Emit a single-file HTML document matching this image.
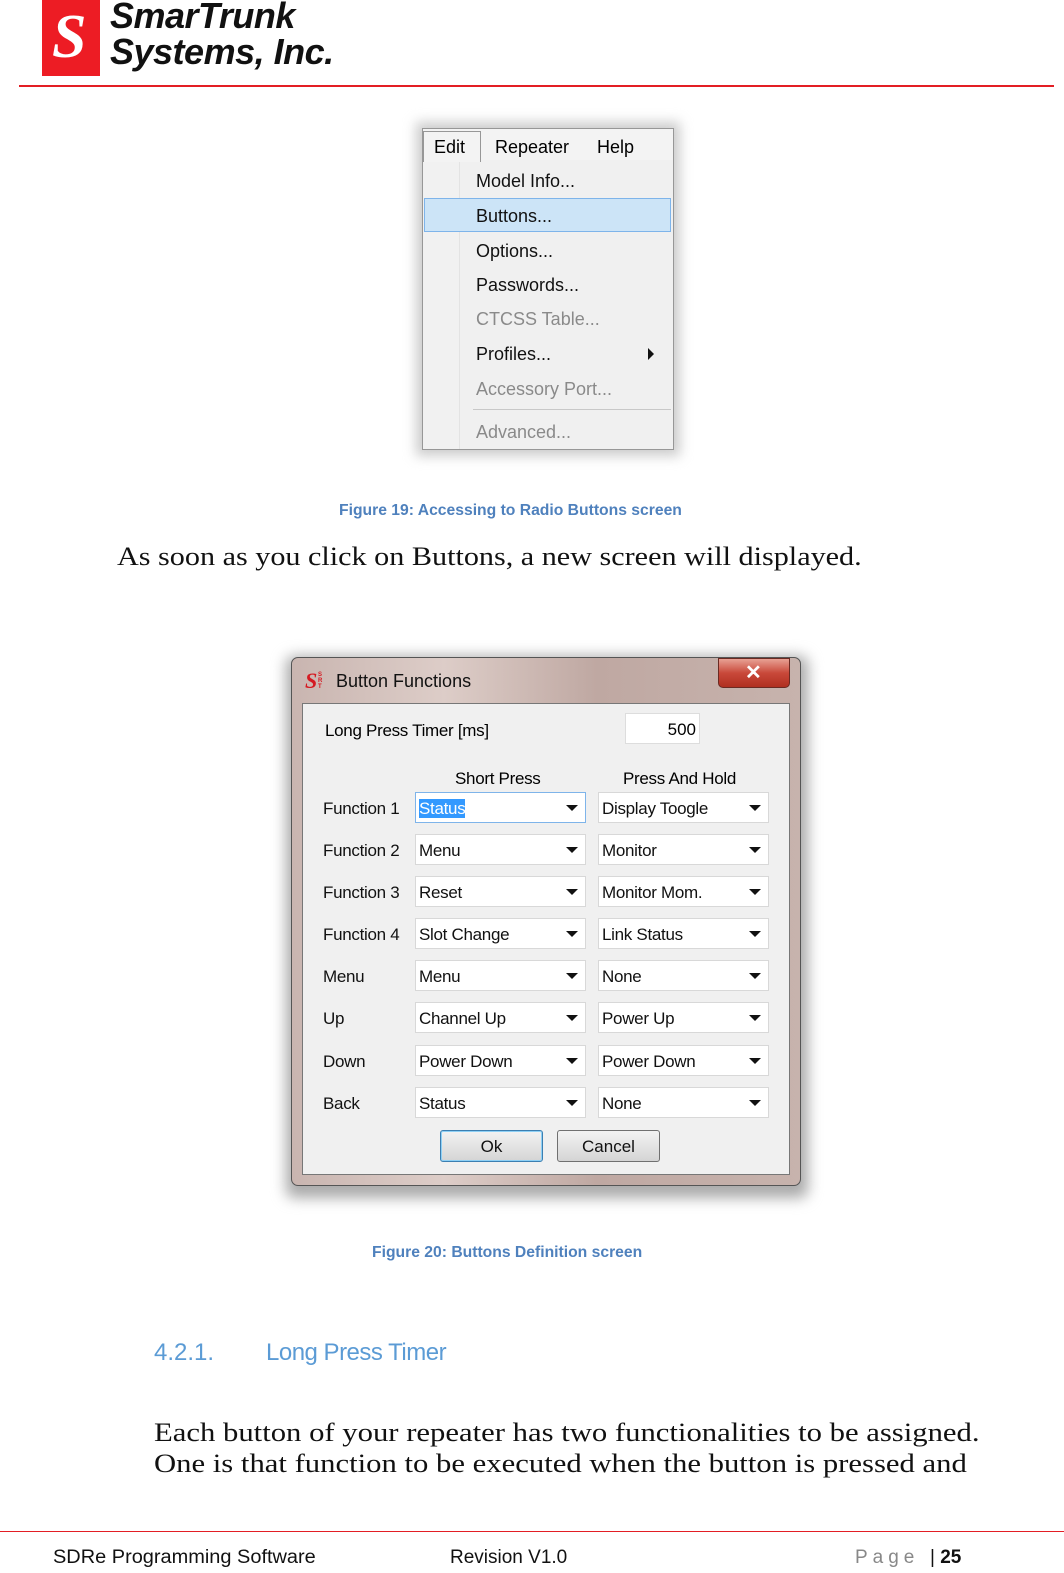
<!DOCTYPE html>
<html><head><meta charset="utf-8"><style>
*{margin:0;padding:0;box-sizing:border-box}
body{width:1064px;height:1573px;position:relative;background:#fff;font-family:"Liberation Sans",sans-serif;overflow:hidden}
.a{position:absolute;white-space:nowrap}
.serif{font-family:"Liberation Serif",serif;font-size:26px;color:#111;transform-origin:0 0}
.cap{font-family:"Liberation Sans",sans-serif;font-weight:bold;font-size:15px;color:#4f81bd}
.mi{position:absolute;left:476px;font-size:18px;color:#111;margin-top:2px}
.dis{color:#8a8a8a}
.lbl{position:absolute;left:323px;font-size:17px;color:#111;letter-spacing:-0.3px;margin-top:3px}
.cb{position:absolute;height:31px;background:#fff;border:1px solid #d8d8d8;font-size:17px;color:#111;padding:6px 0 0 3px;letter-spacing:-0.3px}
.cb::after{content:"";position:absolute;right:7px;top:12px;border-left:6px solid transparent;border-right:6px solid transparent;border-top:6px solid #111}
.btn{position:absolute;top:1130px;height:32px;border:1px solid #707070;border-radius:3px;background:linear-gradient(#f2f2f2,#e4e4e4 50%,#d4d4d4);font-size:17px;text-align:center;line-height:31px;color:#111}
</style></head><body>
<!-- header -->
<div class="a" style="left:42px;top:0;width:58px;height:76px;background:#ed1c24"></div>
<div class="a" style="left:52px;top:4px;font:italic bold 62px 'Liberation Serif',serif;color:#fff;line-height:66px">S</div>
<div class="a" style="left:110px;top:-4px;font:italic bold 36px 'Liberation Sans',sans-serif;color:#111;line-height:40px;letter-spacing:-0.5px">SmarTrunk</div>
<div class="a" style="left:110px;top:32px;font:italic bold 36px 'Liberation Sans',sans-serif;color:#111;line-height:40px;letter-spacing:-0.5px">Systems, Inc.</div>
<div class="a" style="left:19px;top:85px;width:1035px;height:2px;background:#e31e24"></div>

<!-- menu -->
<div class="a" style="left:416px;top:122px;width:264px;height:334px;background:#ccc;filter:blur(6px)"></div>
<div class="a" style="left:422px;top:128px;width:252px;height:322px;background:#f0f0f0;border:1px solid #979797"></div>
<div class="a" style="left:423px;top:129px;width:250px;height:31px;background:#f3f3f3"></div>
<div class="a" style="left:423px;top:131px;width:58px;height:31px;background:#f3f3f3;border:1px solid #979797;border-bottom:none"></div>
<div class="a" style="left:434px;top:137px;font-size:18px">Edit</div>
<div class="a" style="left:495px;top:137px;font-size:18px">Repeater</div>
<div class="a" style="left:597px;top:137px;font-size:18px">Help</div>
<div class="a" style="left:423px;top:162px;width:37px;height:287px;background:#f1f1f1;border-right:1px solid #e3e3e3"></div>
<div class="a" style="left:424px;top:198px;width:247px;height:34px;background:#cce4f7;border:1px solid #7eb4ea"></div>
<div class="mi" style="top:169px">Model Info...</div>
<div class="mi" style="top:204px">Buttons...</div>
<div class="mi" style="top:239px">Options...</div>
<div class="mi" style="top:273px">Passwords...</div>
<div class="mi dis" style="top:307px">CTCSS Table...</div>
<div class="mi" style="top:342px">Profiles...</div>
<div class="a" style="left:648px;top:348px;border-top:6px solid transparent;border-bottom:6px solid transparent;border-left:6px solid #111"></div>
<div class="mi dis" style="top:377px">Accessory Port...</div>
<div class="a" style="left:473px;top:409px;width:198px;height:1px;background:#c8c8c8"></div>
<div class="mi dis" style="top:420px">Advanced...</div>

<div class="a cap" style="left:339px;top:502px;font-size:15.7px">Figure 19: Accessing to Radio Buttons screen</div>
<div class="a serif" style="left:117px;top:542px;transform:scaleX(1.16)">As soon as you click on Buttons, a new screen will displayed.</div>

<!-- dialog -->
<div class="a" style="left:286px;top:656px;width:522px;height:542px;background:#aaa;filter:blur(7px);border-radius:8px"></div>
<div class="a" style="left:291px;top:657px;width:510px;height:529px;border:1px solid #555;border-radius:7px;background:linear-gradient(90deg,#c9b5b0,#ddcdc8 30%,#bfa8a2 60%,#c7b3ad);"></div>
<div class="a" style="left:718px;top:658px;width:72px;height:30px;border-radius:0 0 5px 5px;border:1px solid #6b2a22;background:linear-gradient(#e8a194,#c9493a 50%,#b02f20)"></div>
<div class="a" style="left:745px;top:660px;font:bold 20px 'Liberation Sans',sans-serif;color:#fff">✕</div>
<div class="a" style="left:305px;top:668px;font:italic bold 22px 'Liberation Serif',serif;color:#d51a22">S</div>
<div class="a" style="left:318px;top:672px;font:bold 6px sans-serif;color:#d51a22;line-height:6px">S<br>R<br>T</div>
<div class="a" style="left:336px;top:671px;font-size:18px;color:#111">Button Functions</div>
<div class="a" style="left:302px;top:703px;width:488px;height:472px;background:#f0f0f0;border:1px solid #777"></div>
<div class="a" style="left:325px;top:721px;font-size:17px;letter-spacing:-0.3px">Long Press Timer [ms]</div>
<div class="a" style="left:625px;top:713px;width:75px;height:31px;background:#fff;border:1px solid #ddd;font-size:17px;text-align:right;padding:6px 3px 0 0">500</div>
<div class="a" style="left:455px;top:769px;font-size:17px;letter-spacing:-0.3px">Short Press</div>
<div class="a" style="left:623px;top:769px;font-size:17px;letter-spacing:-0.3px">Press And Hold</div>

<div class="lbl" style="top:796px">Function 1</div>
<div class="cb" style="left:415px;top:792px;width:171px;border-color:#7eb4ea"><span style="background:#3399ff;color:#fff">Status</span></div>
<div class="cb" style="left:598px;top:792px;width:171px">Display Toogle</div>
<div class="lbl" style="top:838px">Function 2</div>
<div class="cb" style="left:415px;top:834px;width:171px">Menu</div>
<div class="cb" style="left:598px;top:834px;width:171px">Monitor</div>
<div class="lbl" style="top:880px">Function 3</div>
<div class="cb" style="left:415px;top:876px;width:171px">Reset</div>
<div class="cb" style="left:598px;top:876px;width:171px">Monitor Mom.</div>
<div class="lbl" style="top:922px">Function 4</div>
<div class="cb" style="left:415px;top:918px;width:171px">Slot Change</div>
<div class="cb" style="left:598px;top:918px;width:171px">Link Status</div>
<div class="lbl" style="top:964px">Menu</div>
<div class="cb" style="left:415px;top:960px;width:171px">Menu</div>
<div class="cb" style="left:598px;top:960px;width:171px">None</div>
<div class="lbl" style="top:1006px">Up</div>
<div class="cb" style="left:415px;top:1002px;width:171px">Channel Up</div>
<div class="cb" style="left:598px;top:1002px;width:171px">Power Up</div>
<div class="lbl" style="top:1049px">Down</div>
<div class="cb" style="left:415px;top:1045px;width:171px">Power Down</div>
<div class="cb" style="left:598px;top:1045px;width:171px">Power Down</div>
<div class="lbl" style="top:1091px">Back</div>
<div class="cb" style="left:415px;top:1087px;width:171px">Status</div>
<div class="cb" style="left:598px;top:1087px;width:171px">None</div>
<div class="btn" style="left:440px;width:103px;border-color:#3c7fb1;box-shadow:inset 0 0 0 1px #8ed0f5">Ok</div>
<div class="btn" style="left:557px;width:103px">Cancel</div>

<div class="a cap" style="left:372px;top:1244px;font-size:15.7px">Figure 20: Buttons Definition screen</div>
<div class="a" style="left:154px;top:1339px;font-size:24px;color:#5b9bd5">4.2.1.</div>
<div class="a" style="left:266px;top:1339px;font-size:24px;color:#5b9bd5;letter-spacing:-0.5px">Long Press Timer</div>
<div class="a serif" style="left:154px;top:1418px;transform:scaleX(1.18)">Each button of your repeater has two functionalities to be assigned.</div>
<div class="a serif" style="left:154px;top:1449px;transform:scaleX(1.18)">One is that function to be executed when the button is pressed and</div>

<div class="a" style="left:0;top:1531px;width:1064px;height:1px;background:#e31e24"></div>
<div class="a" style="left:53px;top:1547px;font-size:19px;color:#111;transform:scaleX(1.05);transform-origin:0 0">SDRe Programming Software</div>
<div class="a" style="left:450px;top:1547px;font-size:19px;color:#111">Revision V1.0</div>
<div class="a" style="left:855px;top:1547px;font-size:19px;color:#888;letter-spacing:5px">Page</div>
<div class="a" style="left:930px;top:1547px;font-size:19px;color:#111">| <b>25</b></div>
</body></html>
